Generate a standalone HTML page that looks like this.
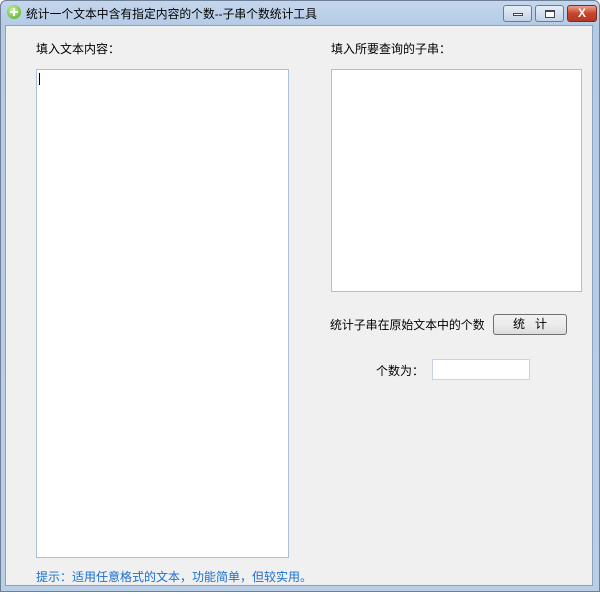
<!DOCTYPE html>
<html><head><meta charset="utf-8"><style>
*{margin:0;padding:0;box-sizing:border-box}
body{width:600px;height:596px;overflow:hidden;background:#fff;position:relative;font-family:"Liberation Sans","Noto Sans CJK SC","WenQuanYi Zen Hei",sans-serif;font-size:12px;color:#000}
.win{position:absolute;left:0;top:0;width:600px;height:592px;background:linear-gradient(#c4d6ec,#b4cbe6 25px,#b9cfe8);border:1px solid #6f7f95;border-radius:6px 6px 0 0}
.client{position:absolute;left:5px;top:25px;width:588px;height:561px;background:#f0f0f0;border:1px solid #8da2bc}
.title{position:absolute;left:26px;top:5px;font-size:11.8px;color:#000}
.icon{position:absolute;left:7px;top:5px;width:14px;height:14px;border-radius:50%;background:radial-gradient(circle at 40% 35%,#c9f59a,#4aa51a)}
.icon:before{content:"";position:absolute;left:3px;top:6px;width:8px;height:2px;background:#fff}
.icon:after{content:"";position:absolute;left:6px;top:3px;width:2px;height:8px;background:#fff}
.btn{position:absolute;top:5px;height:17px;border:1px solid #6b7b93;border-radius:3px;background:linear-gradient(#e6eef8,#c3d3e8)}
.close{background:linear-gradient(#e8a08e,#c8452b 50%,#b23a22);border-color:#7a2d20;color:#fff;font-weight:bold;text-align:center;line-height:15px;font-size:12px}
.lbl{position:absolute;font-size:12px}
.ta{position:absolute;background:#fff;border:1px solid #abc1d8}
.cursor{position:absolute;left:39px;top:73px;width:1px;height:12px;background:#000}
.pb{position:absolute;left:493px;top:314px;width:74px;height:21px;border:1px solid #707070;border-radius:3px;background:linear-gradient(#f2f2f2,#ebebeb 50%,#dcdcdc);text-align:center;line-height:19px}
.tip{position:absolute;left:36px;top:568px;color:#1a6fd0;font-size:12px}
</style></head><body>
<div class="win"></div>
<div class="icon"></div>
<div class="title">统计一个文本中含有指定内容的个数--子串个数统计工具</div>
<div class="btn" style="left:503px;width:29px"><div style="position:absolute;left:9px;top:7px;width:10px;height:3px;background:#fff;border:1px solid #445"></div></div>
<div class="btn" style="left:535px;width:29px"><div style="position:absolute;left:9px;top:4px;width:10px;height:8px;border:1px solid #445;border-top-width:2px;background:#fff"></div></div>
<div class="btn close" style="left:567px;width:30px">X</div>
<div class="client"></div>
<div class="lbl" style="left:36px;top:40px">填入文本内容：</div>
<div class="lbl" style="left:331px;top:40px">填入所要查询的子串：</div>
<div class="ta" style="left:36px;top:69px;width:253px;height:489px"></div>
<div class="cursor"></div>
<div class="ta" style="left:331px;top:69px;width:251px;height:223px"></div>
<div class="lbl" style="left:330px;top:316px;font-size:11.9px">统计子串在原始文本中的个数</div>
<div class="pb">统&nbsp;&nbsp;&nbsp;计</div>
<div class="lbl" style="left:376px;top:362px">个数为：</div>
<div class="ta" style="left:432px;top:359px;width:98px;height:21px;border-color:#c5d3e2"></div>
<div class="tip">提示：适用任意格式的文本，功能简单，但较实用。</div>
</body></html>
